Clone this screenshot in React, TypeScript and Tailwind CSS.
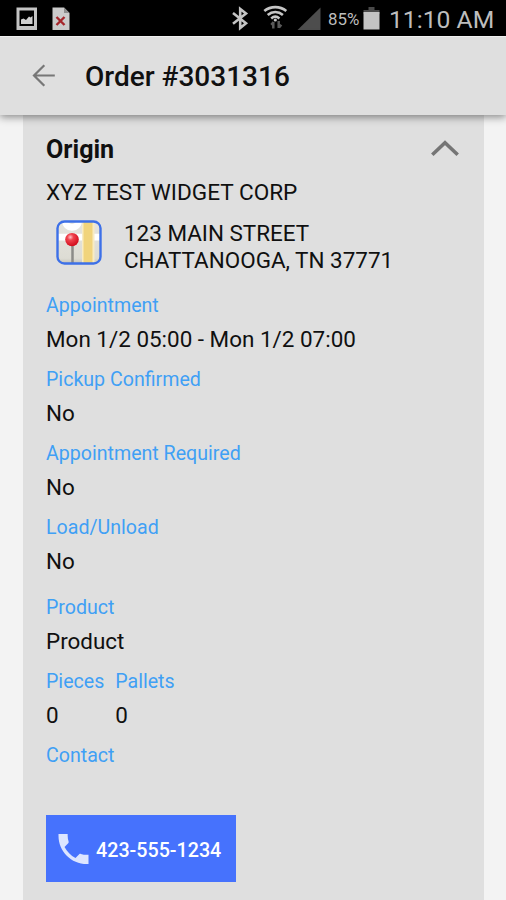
import React from "react";

interface FieldProps {
  label: string;
  value?: string;
}

const Field = ({ label, value }: FieldProps) => (
  <div className="flex flex-col gap-[5px]">
    <p className="h-7 text-[19.6px] leading-7 text-[#3fa0f5]">{label}</p>
    {value && <p className="h-7 text-[22.45px] leading-7">{value}</p>}
  </div>
);

const StatusBar = () => (
  <div className="flex h-9 shrink-0 items-center bg-black text-[#bdbdbd]">
    <svg className="ml-4 h-9 w-[22px]" viewBox="16 0 22 36">
      <rect x="16.5" y="7.5" width="20.5" height="22.5" fill="#c4c4c4" />
      <rect x="19.5" y="10.5" width="14.5" height="15.5" fill="#000" />
      <path d="M21 24v-4.5l2.5-1 2.5 1.5 3-3.5 1.5 1 2-1.5v8z" fill="#d0d0d0" />
    </svg>
    <svg className="ml-[14px] h-9 w-[18px]" viewBox="52 0 18 36">
      <path d="M52.5 7.5H64l5.5 5.5v17h-17z" fill="#cbcbcb" />
      <path d="M64 7.5V13h5.5z" fill="#8d8d8d" />
      <path d="M56.5 17l8 8M64.5 17l-8 8" stroke="#a5262b" strokeWidth="2.4" />
    </svg>

    <svg className="ml-[161px] h-9 w-[20px]" viewBox="231 0 20 36" fill="none">
      <path
        d="M233 13l13 10.2-5.8 4.8V9l5.800 4.600L233 23.800"
        stroke="#c4c4c4"
        strokeWidth="2.6"
      />
    </svg>
    <svg className="ml-[12px] h-9 w-[26px]" viewBox="263 0 26 36" fill="none">
      <g stroke="#c6c6c6" strokeWidth="2.6">
        <path d="M264.3 11c6.3-5.2 15.7-5.2 22 0" />
        <path d="M267.7 14.9c4.5-3.9 10.7-3.9 15.2 0" />
        <path d="M271.2 18.4c2.5-2.1 5.7-2.1 8.2 0" />
      </g>
      <circle cx="275.3" cy="20" r="1.6" fill="#c6c6c6" />
      <path
        d="M273.3 28.5V22M271.3 24.8l2.3-2.6M278.7 21v7M279 27.5l2.3-2.8"
        stroke="#5a5a5a"
        strokeWidth="2.5"
      />
    </svg>
    <svg className="ml-[8px] h-9 w-[24px]" viewBox="297 0 24 36">
      <path d="M297.5 30L320.5 7.5V30z" fill="#4d4d4d" />
    </svg>
    <span className="ml-[7px] w-[32px] whitespace-nowrap pt-[2px] text-[16.9px] leading-[34px]">
      85%
    </span>
    <svg className="ml-[3px] h-9 w-[17px]" viewBox="363 0 17 36">
      <path d="M368.5 7h6v3h5v4h-16v-4h5z" fill="#4a4a4a" />
      <rect x="363.5" y="12" width="16" height="17.5" fill="#c3c3c3" />
    </svg>
    <span className="ml-[9px] whitespace-nowrap pt-1 text-[24.7px] leading-8">
      11:10 AM
    </span>
  </div>
);

const Toolbar = () => (
  <header className="relative z-10 flex h-[79px] shrink-0 items-center border-t border-[#efefef] bg-[#dfdfdf] shadow-[0_2px_8px_rgba(0,0,0,0.45)]">
    <svg
      className="ml-[32px] h-6 w-6"
      viewBox="0 0 24 24"
      fill="none"
      stroke="#777"
      strokeWidth="2.2"
    >
      <path d="M22.8 11.5H2M12.3 1.3L2 11.5l10.3 10.2" />
    </svg>
    <h1 className="ml-[29px] pt-0.5 text-[28px] font-medium leading-9">
      Order #3031316
    </h1>
  </header>
);

const MapIcon = () => (
  <svg className="mt-px h-[45px] w-[46px]" viewBox="0 0 46 46" preserveAspectRatio="none">
    <defs>
      <clipPath id="tile">
        <rect x="1.5" y="1.5" width="43" height="43" rx="7" />
      </clipPath>
      <radialGradient id="pin" cx="0.38" cy="0.32" r="0.65">
        <stop offset="0" stopColor="#ffc4c8" />
        <stop offset="0.35" stopColor="#f0434d" />
        <stop offset="1" stopColor="#d3101f" />
      </radialGradient>
      <linearGradient id="land" x1="0" y1="0" x2="0" y2="1">
        <stop offset="0" stopColor="#e6e5df" />
        <stop offset="0.85" stopColor="#dddcd4" />
        <stop offset="1" stopColor="#bdbbb0" />
      </linearGradient>
    </defs>
    <g clipPath="url(#tile)">
      <rect width="46" height="46" fill="url(#land)" />
      <path d="M0 14h46v7H0z" fill="#fff" />
      <circle cx="16" cy="1" r="10" fill="#fff" />
      <circle cx="16" cy="-1" r="5" fill="#e6e5df" />
      <path d="M26 0h12.5v46H26z" fill="#f8ecc4" />
      <path d="M27.5 0h9v46h-9z" fill="#f1d47c" />
      <path d="M16.5 26v20" stroke="#8b8b88" strokeWidth="2.5" />
      <circle cx="16" cy="20" r="6.8" fill="url(#pin)" />
    </g>
    <rect
      x="1.5"
      y="1.5"
      width="43"
      height="43"
      rx="7"
      fill="none"
      stroke="#3d70e8"
      strokeWidth="2.4"
    />
  </svg>
);

const OriginCard = () => (
  <section className="ml-[23px] mr-[22px] flex-1 bg-[#dfdfdf] pl-[23px] pt-[18px]">
    <div className="flex h-8 items-center justify-between pr-[25px]">
      <h2 className="pt-0.5 text-[25.1px] font-bold leading-8">Origin</h2>
      <svg
        className="h-5 w-7"
        viewBox="0 0 28 20"
        fill="none"
        stroke="#757575"
        strokeWidth="3.6"
      >
        <path d="M1.3 15.7L14 3.8l12.7 11.9" />
      </svg>
    </div>

    <p className="mt-[14px] h-7 text-[22.6px] leading-7">XYZ TEST WIDGET CORP</p>

    <div className="mt-3 flex h-[54px] pl-[10px]">
      <MapIcon />
      <address className="ml-[22px] whitespace-nowrap pt-px text-[22.45px] not-italic leading-[26.5px]">
        123 MAIN STREET
        <br />
        CHATTANOOGA, TN 37771
      </address>
    </div>

    <div className="mt-[19px] flex flex-col gap-[13px]">
      <Field label="Appointment" value="Mon 1/2 05:00 - Mon 1/2 07:00" />
      <Field label="Pickup Confirmed" value="No" />
      <Field label="Appointment Required" value="No" />
      <Field label="Load/Unload" value="No" />
    </div>

    <div className="mt-[19px] flex flex-col gap-[13px]">
      <Field label="Product" value="Product" />
      <div className="flex gap-[11px]">
        <Field label="Pieces" value="0" />
        <Field label="Pallets" value="0" />
      </div>
      <Field label="Contact" />
    </div>

    <button className="mt-[45px] flex h-[67px] w-[190px] items-center bg-[#4672fd] text-white">
      <svg className="ml-[12px] mt-px h-[30px] w-[31px]" viewBox="3 3 18 18" fill="#dce5ff">
        <path d="M6.620 10.790c1.440 2.830 3.760 5.140 6.590 6.590l2.200-2.200c.270-.270.670-.360 1.020-.240 1.120.370 2.330.570 3.570.570h1V21h-1c-9.390 0-17-7.610-17-17V3h5.500v1c0 1.250.200 2.450.570 3.570.110.350.030.740-.250 1.020l-2.200 2.200z" />
      </svg>
      <span className="ml-[7px] pt-1 text-[19.7px] font-medium leading-7">
        423-555-1234
      </span>
    </button>
  </section>
);

const App = () => (
  <main className="flex h-screen w-full flex-col overflow-hidden bg-[#f3f3f3] font-['Roboto',sans-serif] text-[#101010]">
    <StatusBar />
    <Toolbar />
    <OriginCard />
  </main>
);

export default App;
